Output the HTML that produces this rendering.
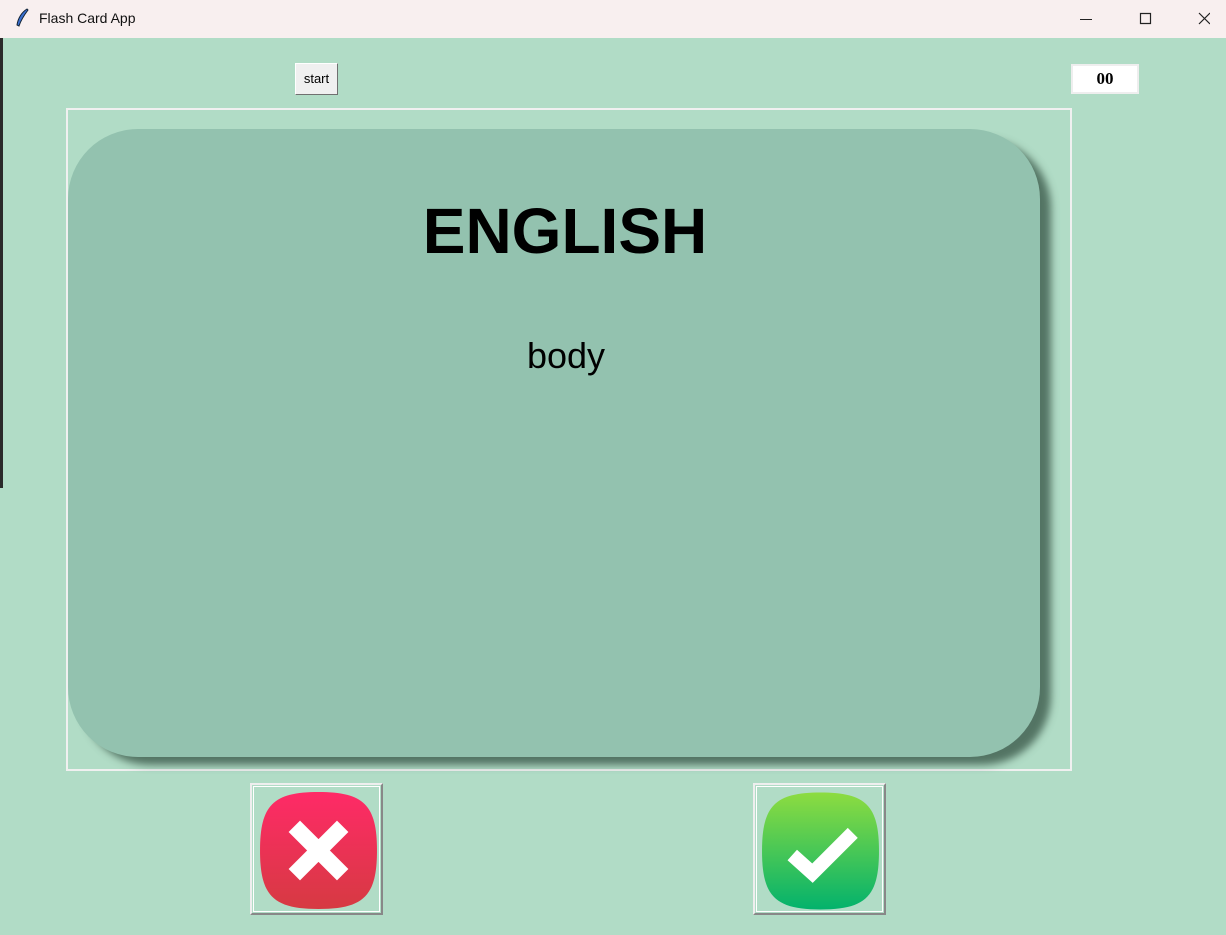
<!DOCTYPE html>
<html style="width:1226px;height:935px;overflow:hidden"><head><style>
*{margin:0;padding:0;box-sizing:border-box}
body{width:1226px;height:935px;background:#b1dcc6;position:relative;overflow:hidden;font-family:"Liberation Sans",sans-serif}
.tb{position:absolute;left:0;top:0;width:1226px;height:38px;background:#f8efef}
.tb .t{position:absolute;left:39px;top:10px;font-size:14px;color:#111}
.leftedge{position:absolute;left:0;width:3px;background:#2a2a2a}
.start{position:absolute;left:295px;top:63px;width:43px;height:32px;background:#f0f0f0;border:1px solid;border-color:#fff #707070 #707070 #fff;font-size:13px;text-align:center;line-height:30px;color:#000}
.timer{position:absolute;left:1071px;top:64px;width:68px;height:30px;background:#fff;border:2px solid #eee;font-family:"Liberation Serif",serif;font-weight:bold;font-size:17px;text-align:center;line-height:25px}
.frame{position:absolute;left:66px;top:108px;width:1006px;height:663px;border:2px solid #f0f0f0}
.card{position:absolute;left:68px;top:129px;width:972px;height:628px;background:#93c2af;border-radius:70px;box-shadow:12px 9px 8px -1px rgba(60,90,75,.8)}
.h{position:absolute;left:0;width:1130px;text-align:center;top:194px;font-size:64px;font-weight:bold}
.w{position:absolute;left:0;width:1132px;text-align:center;top:335px;font-size:36px}
.btn{position:absolute;width:133px;height:132px;border:2px solid;border-color:#eee #888 #888 #eee;}
.btn::before{content:"";position:absolute;inset:1px;border:1px solid #fff}
</style></head><body>
<div class="tb"><svg style="position:absolute;left:14px;top:8px" width="16" height="22" viewBox="0 0 16 22"><path d="M13 1 C8 4 4 10 3 17 L5 18 C7 12 11 6 14 2Z" fill="#3a6fd0" stroke="#123" stroke-width="1"/></svg><span class="t">Flash Card App</span>
<svg style="position:absolute;left:1080px;top:12px" width="130" height="16"><path d="M0 7.5h12" stroke="#222"/><path d="M60.5 1.5h10v10h-10z" fill="none" stroke="#222" stroke-width="1.2"/><path d="M119 1l11 11M130 1l-11 11" stroke="#222" stroke-width="1.2"/></svg></div>
<div class="leftedge" style="top:38px;height:450px"></div>
<div class="start">start</div>
<div class="timer">00</div>
<div class="frame"></div>
<div class="card"></div>
<div class="h">ENGLISH</div>
<div class="w">body</div>
<div class="btn" style="left:250px;top:783px">
<svg style="position:absolute;left:6px;top:5px" width="121" height="121" viewBox="0 0 120 120"><defs><linearGradient id="r" x1="0" y1="0" x2="0" y2="1"><stop offset="0" stop-color="#ff2a67"/><stop offset="1" stop-color="#d63a42"/></linearGradient></defs><path d="M60 2C105 2 118 15 118 60S105 118 60 118 2 105 2 60 15 2 60 2Z" fill="url(#r)"/><path d="M36 36L84 84M84 36L36 84" stroke="#fff" stroke-width="16"/></svg></div>
<div class="btn" style="left:753px;top:783px">
<svg style="position:absolute;left:5px;top:5px" width="121" height="122" viewBox="0 0 120 120"><defs><linearGradient id="g" x1="0" y1="0" x2="0" y2="1"><stop offset="0" stop-color="#8ddc40"/><stop offset="1" stop-color="#03b26c"/></linearGradient></defs><path d="M60 2C105 2 118 15 118 60S105 118 60 118 2 105 2 60 15 2 60 2Z" fill="url(#g)"/><path d="M32 64L52 82L92 42" fill="none" stroke="#fff" stroke-width="14"/></svg></div>
</body></html>
